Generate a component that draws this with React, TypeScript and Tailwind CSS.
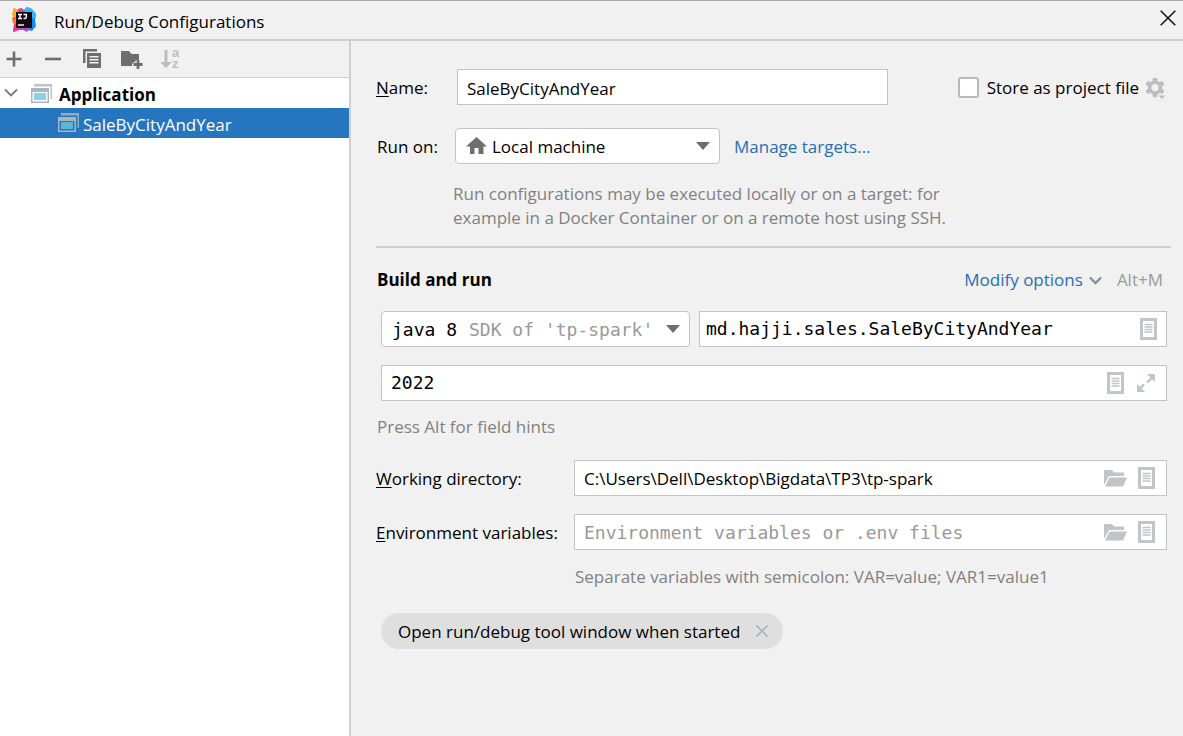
import React, { useState } from "react";

const FIELD = "flex h-9 items-center border border-[#c4c4c4] bg-white";
const MONO = "font-['DejaVu_Sans_Mono',monospace] text-lg";

function AppLogo() {
  return (
    <svg width="26" height="26" viewBox="0 0 26 26" aria-hidden="true">
      <path d="M3 1l3 2 3 -2 3 1 2 3 -1 16 -5 2 -6 2 1 -7 -2 -6 2 -4 -1 -4z" fill="#f9503b" />
      <path d="M3 1l3 2 2 3 -1 5 -5 -1 -1 -3z" fill="#fbab2c" />
      <path d="M1 11l6 1 0 6 -4 -1z" fill="#fb7a3a" />
      <path d="M3 18l5 -2 4 7 -5 0 -5 2z" fill="#ee2f9b" />
      <path d="M9 1l3 1 2 4h-6z" fill="#e8408d" />
      <path d="M13 3l3 -3 5 2 4 5 -1 7 1 5 -4 5 -4 -1z" fill="#1787f5" />
      <path d="M13 3l3 -3 5 2 4 5 -2 5 -8 -5z" fill="#35b6f8" />
      <path d="M11 21h8l-3 4 -4 -2z" fill="#a94ce0" />
      <rect x="5" y="5" width="16" height="16" fill="#150811" />
      <path d="M7 7.500h4M9 7.500v4M7 11.500h4M12.500 7.500h3.500M15.300 7.500v2.500q0 1.500 -1.500 1.500h-1.300" stroke="#fff" strokeWidth="1.400" fill="none" />
      <path d="M7 18h6" stroke="#fff" strokeWidth="1.400" />
    </svg>
  );
}

function ConfigIcon({ selected = false }: { selected?: boolean }) {
  return (
    <svg width="22" height="20" viewBox="0 0 22 20" aria-hidden="true" className="shrink-0">
      <path d="M3 0h18v15h-1.500V2.500H3z" fill="#a9b5bd" opacity={selected ? 0.85 : 0.8} />
      <path fillRule="evenodd" d="M0 4h18v15H0zM1.500 8v9.500h15V8z" fill="#a9b5bd" />
      <rect x="3" y="9" width="12" height="7" fill={selected ? "#5cb5d6" : "#88d1ec"} />
    </svg>
  );
}

function ListIcon() {
  return (
    <svg width="18" height="22" viewBox="0 0 18 22" aria-hidden="true">
      <path fillRule="evenodd" d="M0 0h17v22H0zM3 3v16h11V3z" fill="#bfc5c9" />
      <path d="M4.500 6.500h8M4.500 9h8M4.500 11.500h8M4.500 14h8" stroke="#bfc5c9" strokeWidth="1.300" />
    </svg>
  );
}

function FolderIcon() {
  return (
    <svg width="24" height="18" viewBox="0 0 24 18" aria-hidden="true">
      <path d="M0 1h8l2 2.500h10V7H5L0 16z" fill="#bfc5c9" />
      <path d="M5.500 8.500h17.500l-4 9H1z" fill="#bfc5c9" />
    </svg>
  );
}

function ExpandIcon() {
  return (
    <svg width="20" height="20" viewBox="0 0 20 20" aria-hidden="true">
      <path d="M11 1h8v8l-2.800 -2.800 -4.200 4.200 -1.800 -1.800 4.200 -4.200zM1 19v-8l2.800 2.800 3.400 -3.400 1.800 1.800 -3.400 3.400L9 19z" fill="#bfc5c9" />
    </svg>
  );
}

function Caret() {
  return (
    <svg width="14" height="8" viewBox="0 0 14 8" aria-hidden="true">
      <path d="M0 0h14L7 8z" fill="#6e6e6e" />
    </svg>
  );
}

function Toolbar() {
  return (
    <div className="flex h-[37px] items-center border-b border-[#cfcfcf] pl-1">
      <button aria-label="Add" className="flex w-[39px] pl-[2px]">
        <svg width="16" height="16" viewBox="0 0 16 16"><path d="M8 .500v15M.500 8h15" stroke="#6e6e6e" strokeWidth="2.600" /></svg>
      </button>
      <button aria-label="Remove" className="flex w-10 pl-[2px]">
        <svg width="16" height="16" viewBox="0 0 16 16"><path d="M0 8h16" stroke="#6e6e6e" strokeWidth="2.600" /></svg>
      </button>
      <button aria-label="Copy" className="flex w-[38px]">
        <svg width="20" height="20" viewBox="0 0 20 20">
          <path d="M0 0h14v2.500H2.500V14H0z" fill="#6e6e6e" />
          <path fillRule="evenodd" d="M4 4h14v15H4zM6.500 7v1.500h9V7zM6.500 10v1.500h9V10zM6.500 13v1.500h9V13z" fill="#6e6e6e" />
        </svg>
      </button>
      <button aria-label="Create folder" className="flex w-[39px]">
        <svg width="22" height="20" viewBox="0 0 22 20">
          <path d="M0 2h8l2.500 3H18v7h-3.500v2.500H11V17H0z" fill="#6e6e6e" />
          <path d="M17 11v9M12.500 15.500h9" stroke="#f1f1f1" strokeWidth="4.600" />
          <path d="M17 11v9M12.500 15.500h9" stroke="#6e6e6e" strokeWidth="2.800" />
        </svg>
      </button>
      <button aria-label="Sort alphabetically" disabled className="flex items-center">
        <svg width="12" height="20" viewBox="0 0 12 20">
          <path d="M4.500 1h3v12H12L6 19 0 13h4.500z" fill="#bdbdbd" />
        </svg>
        <span className="flex flex-col pb-0.5 text-left font-['Liberation_Sans',sans-serif] text-[13px] leading-[11px] font-bold text-[#bdbdbd]">
          <span>a</span>
          <span>z</span>
        </span>
      </button>
    </div>
  );
}

export default function App() {
  const [name, setName] = useState("SaleByCityAndYear");
  const [mainClass, setMainClass] = useState("md.hajji.sales.SaleByCityAndYear");
  const [args, setArgs] = useState("2022");
  const [dir, setDir] = useState("C:\\Users\\Dell\\Desktop\\Bigdata\\TP3\\tp-spark");
  const [env, setEnv] = useState("");
  const [stored, setStored] = useState(false);

  return (
    <div className="flex min-h-screen flex-col border-t border-[#a8a8a8] bg-[#f1f1f1] font-['Open_Sans',sans-serif] text-[17px] leading-6 text-black">
      <header className="flex h-10 items-center border-b-2 border-[#d0d0d0] pr-1.5 pl-[11px]">
        <AppLogo />
        <h1 className="ml-[17px] grow pt-1">Run/Debug Configurations</h1>
        <button aria-label="Close" className="mb-1 p-[1px]">
          <svg width="16" height="16" viewBox="0 0 16 16"><path d="M.700 .700l14.600 14.600M15.300 .700L.700 15.300" stroke="#111" strokeWidth="1.500" /></svg>
        </button>
      </header>

      <div className="flex grow">
        <aside className="flex w-[351px] shrink-0 flex-col border-r-2 border-[#d0d0d0]">
          <Toolbar />
          <ul className="grow bg-white">
            <li>
              <button className="flex h-[30px] w-full items-center pl-1 text-left font-bold">
                <svg width="14" height="10" viewBox="0 0 14 10" aria-hidden="true"><path d="M1 1.500l6 6 6 -6" stroke="#7a7a7a" strokeWidth="1.800" fill="none" /></svg>
                <span className="mr-1.5 ml-[13px] flex pt-0.5"><ConfigIcon /></span>
                <span className="pt-1">Application</span>
              </button>
              <ul>
                <li>
                  <button className="flex h-[30px] w-full items-center gap-[3px] bg-[#2675bf] pl-[58px] text-left text-white">
                    <ConfigIcon selected />
                    <span className="pt-1">SaleByCityAndYear</span>
                  </button>
                </li>
              </ul>
            </li>
          </ul>
        </aside>

        <main className="min-w-0 grow pt-7 pr-3 pl-[25px]">
          <div className="flex items-center pr-1">
            <label htmlFor="name" className="w-[81px] shrink-0 pt-0.5"><u className="underline-offset-2">N</u>ame:</label>
            <input id="name" value={name} onChange={(e) => setName(e.target.value)} className={`${FIELD} w-[431px] min-w-0 px-[9px] pt-0.5`} />
            <div className="ml-auto flex items-center">
              <input id="store" type="checkbox" checked={stored} onChange={(e) => setStored(e.target.checked)} className="mr-2 size-[21px] appearance-none rounded-[3px] border-2 border-[#b8b8b8] bg-white checked:bg-[#2675bf]" />
              <label htmlFor="store" className="whitespace-nowrap pt-0.5">Store as project file</label>
              <button aria-label="Storage options" className="ml-1.5 pt-1">
                <svg width="22" height="22" viewBox="0 0 22 22">
                  <path fillRule="evenodd" d="M8 0h4l.600 3 1.900 1.100 2.900 -1 2 3.400 -2.300 2v2.200l2.300 2 -2 3.400 -2.900 -1 -1.900 1.100 -.600 3H8l-.600 -3 -1.900 -1.100 -2.900 1 -2 -3.400 2.300 -2V8.500l-2.300 -2 2 -3.400 2.900 1L7.400 3zM10 6a3.600 3.600 0 100 7.200A3.600 3.600 0 0010 6z" fill="#bdbdbd" />
                  <path d="M12.500 17h9l-4.500 4.500z" fill="#bdbdbd" stroke="#f1f1f1" strokeWidth="1" />
                </svg>
              </button>
            </div>
          </div>

          <div className="mt-[23px] flex items-center">
            <label htmlFor="target" className="w-[79px] shrink-0 pt-0.5 pl-px">Run on:</label>
            <div className="grid h-9 w-[265px] items-center rounded border border-[#c4c4c4] bg-white">
              <select id="target" className="col-start-1 row-start-1 h-full w-full appearance-none bg-transparent pt-0.5 pl-9">
                <option>Local machine</option>
              </select>
              <div className="pointer-events-none col-start-1 row-start-1 flex items-center justify-between pr-[9px] pl-2.5">
                <svg width="21" height="18" viewBox="0 0 21 18" aria-hidden="true"><path d="M10.500 0L21 9.500h-3.500V17H12.500v-6h-4v6H4V9.500H0z" fill="#6e6e6e" /></svg>
                <Caret />
              </div>
            </div>
            <a href="#targets" className="ml-[14px] pt-0.5 text-[#2470b3]">Manage targets...</a>
          </div>

          <p className="mt-[18px] ml-[77px] max-w-[510px] text-[#818181]">
            Run configurations may be executed locally or on a target: for example in a Docker Container or on a remote host using SSH.
          </p>

          <hr className="mt-4 border-t-2 border-[#d0d0d0]" />

          <div className="mt-5 flex items-center pr-2">
            <h2 className="grow pl-px font-bold">Build and run</h2>
            <button className="flex items-center gap-1.5 text-[#2470b3]">
              Modify options
              <svg width="13" height="9" viewBox="0 0 13 9" aria-hidden="true"><path d="M1 1.500l5.500 5.500L12 1.500" stroke="#899097" strokeWidth="2.400" fill="none" /></svg>
            </button>
            <span className="ml-[15px] text-[#999]">Alt+M</span>
          </div>

          <div className="mt-[19px] flex gap-[9px] pr-1 pl-[5px]">
            <div className="grid h-9 w-[309px] shrink-0 items-center rounded border border-[#c4c4c4] bg-white">
              <select aria-label="JRE" className={`${MONO} col-start-1 row-start-1 h-full w-full appearance-none bg-transparent pt-0.5 pl-2.5`}>
                <option>java 8</option>
              </select>
              <div className="pointer-events-none col-start-1 row-start-1 flex items-center justify-between pr-[9px] pl-[87px]">
                <span className={`${MONO} whitespace-nowrap pt-0.5 text-[#999]`}>SDK of 'tp-spark'</span>
                <Caret />
              </div>
            </div>
            <div className={`${FIELD} min-w-0 grow pr-2 pl-1.5`}>
              <input aria-label="Main class" value={mainClass} onChange={(e) => setMainClass(e.target.value)} className={`${MONO} min-w-0 grow outline-none`} />
              <button aria-label="Choose main class"><ListIcon /></button>
            </div>
          </div>

          <div className="mt-[18px] pr-1 pl-[5px]">
            <div className={`${FIELD} pr-2.5 pl-[9px]`}>
              <input aria-label="Program arguments" value={args} onChange={(e) => setArgs(e.target.value)} className={`${MONO} min-w-0 grow outline-none`} />
              <button aria-label="Insert macro"><ListIcon /></button>
              <button aria-label="Expand" className="ml-[11px]"><ExpandIcon /></button>
            </div>
          </div>

          <p className="mt-[14px] pl-px text-[#818181]">Press Alt for field hints</p>

          <div className="mt-[21px] flex items-center pr-1">
            <label htmlFor="dir" className="w-[198px] shrink-0 pt-0.5"><u className="underline-offset-2">W</u>orking directory:</label>
            <div className={`${FIELD} min-w-0 grow pr-2.5 pl-[9px]`}>
              <input id="dir" value={dir} onChange={(e) => setDir(e.target.value)} className="min-w-0 grow pt-0.5 outline-none" />
              <button aria-label="Browse directory"><FolderIcon /></button>
              <button aria-label="Insert macro in directory" className="ml-2.5"><ListIcon /></button>
            </div>
          </div>

          <div className="mt-[18px] flex items-center pr-1">
            <label htmlFor="env" className="w-[198px] shrink-0 pt-0.5"><u className="underline-offset-2">E</u>nvironment variables:</label>
            <div className={`${FIELD} min-w-0 grow pr-2.5 pl-[9px]`}>
              <input id="env" value={env} placeholder="Environment variables or .env files" onChange={(e) => setEnv(e.target.value)} className={`${MONO} min-w-0 grow pt-0.5 outline-none placeholder:text-[#999]`} />
              <button aria-label="Browse .env files"><FolderIcon /></button>
              <button aria-label="Edit variables" className="ml-2.5"><ListIcon /></button>
            </div>
          </div>

          <p className="mt-[15px] pl-[199px] text-[#818181]">Separate variables with semicolon: VAR=value; VAR1=value1</p>

          <div className="mt-6 ml-[5px] flex h-9 w-fit items-center rounded-full bg-[#dfdfdf] pr-[15px] pl-[17px]">
            <span className="pt-0.5">Open run/debug tool window when started</span>
            <button aria-label="Remove option" className="ml-4">
              <svg width="12" height="12" viewBox="0 0 12 12"><path d="M.500 .500l11 11M11.500 .500l-11 11" stroke="#a5adb3" strokeWidth="1.500" /></svg>
            </button>
          </div>
        </main>
      </div>
    </div>
  );
}
